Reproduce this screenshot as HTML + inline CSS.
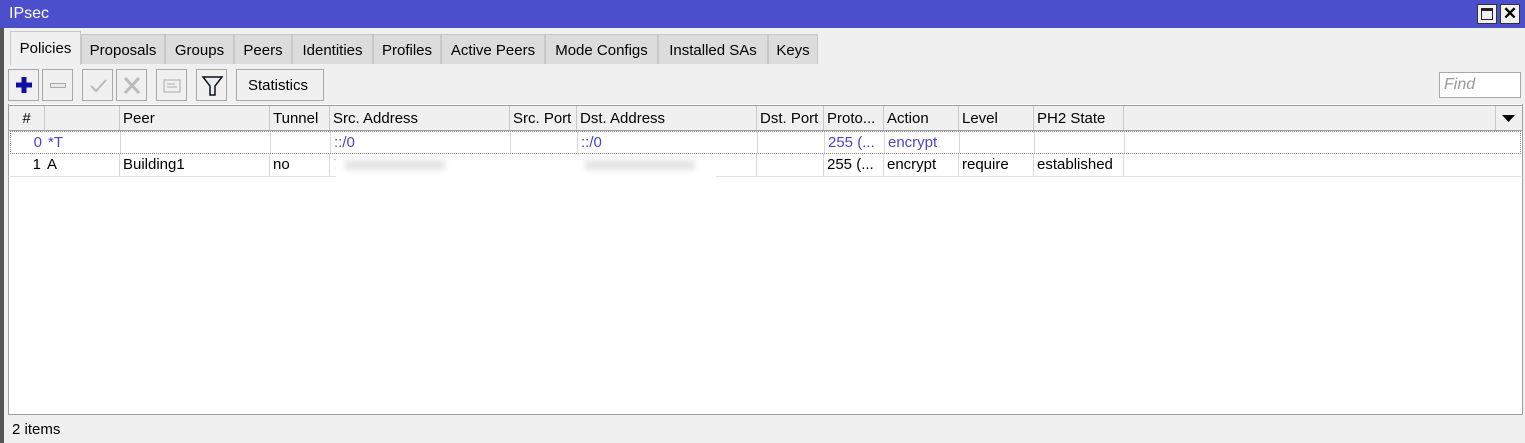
<!DOCTYPE html>
<html><head><style>
*{margin:0;padding:0;box-sizing:border-box}
body{width:1525px;height:443px;background:#f0f0f0;font-family:"Liberation Sans",Arial,sans-serif;font-size:15px;color:#000;position:relative;overflow:hidden}
.a{position:absolute}
.title{left:0;top:0;width:1525px;height:28px;background:#4b4fcc;color:#fff;padding:5px 0 0 9px;font-size:16px}
.wb{top:4px;width:20px;height:20px;background:#f0f0f0;border:1px solid #333}
.tab{top:34px;height:30px;background:#dcdcdc;border:1px solid #c8c8c8;border-bottom:none;padding:7px 0 0 0;text-align:center}
.tb{top:69px;height:32px;border:1px solid #a8a8a8;background:#f0f0f0}
.hd{top:105px;height:26px;border-top:1px solid #a0a0a0;border-bottom:1px solid #a0a0a0;background:#f0f0f0}
.c{position:absolute;top:0;height:100%;border-left:1px solid #c8c8c8;padding:4px 0 0 3px;white-space:nowrap;overflow:hidden}
.row{left:10px;width:1511px;height:23px}
.row .c{border-left:1px solid #d8d8d8;padding-top:2px}
.blue{color:#4a46c8}
</style></head><body>
<div class="a" style="left:0;top:0;width:4px;height:443px;background:#555"></div>
<div class="a title">IPsec</div>
<div class="a wb" style="left:1477px"><div class="a" style="left:3px;top:3px;width:12px;height:12px;border:1.5px solid #222;border-top-width:3px"></div></div>
<div class="a wb" style="left:1500px;text-align:center;font-size:17px;line-height:17px;font-weight:bold">✕</div>

<div class="a tab" style="left:10px;width:71px;top:31px;height:34px;background:#f0f0f0;padding-top:8px">Policies</div>
<div class="a tab" style="left:81px;width:84px">Proposals</div>
<div class="a tab" style="left:165px;width:69px">Groups</div>
<div class="a tab" style="left:234px;width:58px">Peers</div>
<div class="a tab" style="left:292px;width:81px">Identities</div>
<div class="a tab" style="left:373px;width:68px">Profiles</div>
<div class="a tab" style="left:441px;width:104px">Active Peers</div>
<div class="a tab" style="left:545px;width:113px">Mode Configs</div>
<div class="a tab" style="left:658px;width:110px">Installed SAs</div>
<div class="a tab" style="left:768px;width:50px">Keys</div>

<div class="a tb" style="left:8px;width:31px"><svg width="31" height="32"><path d="M15 7v16M7 15h16" stroke="#1010a0" stroke-width="5"/></svg></div>
<div class="a tb" style="left:42px;width:31px"><div class="a" style="left:7px;top:13px;width:16px;height:5px;border:1px solid #aaa;background:#e8e8e8"></div></div>
<div class="a tb" style="left:82px;width:31px"><svg width="31" height="32"><path d="M8 16l5 5 10-11" stroke="#bbb" stroke-width="2" fill="none"/></svg></div>
<div class="a tb" style="left:116px;width:31px"><svg width="31" height="32"><path d="M8 8l14 15M22 8L8 23" stroke="#bbb" stroke-width="3" fill="none"/></svg></div>
<div class="a tb" style="left:156px;width:31px"><svg width="31" height="32"><rect x="7" y="10" width="16" height="12" stroke="#aaa" fill="none"/><path d="M10 14h8M10 17h10" stroke="#aaa"/></svg></div>
<div class="a tb" style="left:196px;width:31px"><svg width="31" height="32"><path d="M6 7h19l-7 9v9h-5v-9z" stroke="#111" stroke-width="1.5" fill="#e8eef8"/></svg></div>
<div class="a tb" style="left:236px;width:88px;padding:7px 0 0 11px">Statistics</div>
<div class="a" style="left:1439px;top:72px;width:82px;height:26px;border:1px solid #a8a8a8;background:#fff;color:#999;font-style:italic;padding:3px 0 0 4px;font-size:16px">Find</div>

<div class="a" style="left:8px;top:104px;width:1515px;height:311px;background:#fff;border-left:1px solid #a0a0a0;border-right:1px solid #a0a0a0"></div>
<div class="a hd" style="left:9px;width:1513px">
<div class="c" style="left:0;width:35px;border:none;text-align:center;padding-left:0">#</div>
<div class="c" style="left:35px;width:75px"></div>
<div class="c" style="left:110px;width:150px">Peer</div>
<div class="c" style="left:260px;width:60px">Tunnel</div>
<div class="c" style="left:320px;width:180px">Src. Address</div>
<div class="c" style="left:500px;width:67px">Src. Port</div>
<div class="c" style="left:567px;width:180px">Dst. Address</div>
<div class="c" style="left:747px;width:67px">Dst. Port</div>
<div class="c" style="left:814px;width:60px">Proto...</div>
<div class="c" style="left:874px;width:75px">Action</div>
<div class="c" style="left:949px;width:75px">Level</div>
<div class="c" style="left:1024px;width:90px">PH2 State</div>
<div class="c" style="left:1114px;width:372px"></div>
<div class="c" style="left:1486px;width:27px;padding:0"><svg width="26" height="24"><path d="M6 9h13l-6.5 7z" fill="#000"/></svg></div>
</div>

<div class="a row blue" style="top:131px;border:1px dotted #888">
<div class="c" style="left:0;width:34px;border:none;text-align:right;padding-right:3px">0</div>
<div class="c" style="left:34px;width:75px;border-left:none">*T</div>
<div class="c" style="left:109px;width:150px"></div>
<div class="c" style="left:259px;width:60px"></div>
<div class="c" style="left:319px;width:180px">::/0</div>
<div class="c" style="left:499px;width:67px"></div>
<div class="c" style="left:566px;width:180px">::/0</div>
<div class="c" style="left:746px;width:67px"></div>
<div class="c" style="left:813px;width:60px">255 (...</div>
<div class="c" style="left:873px;width:75px">encrypt</div>
<div class="c" style="left:948px;width:75px"></div>
<div class="c" style="left:1023px;width:90px"></div>
<div class="c" style="left:1113px;width:398px"></div>
</div>
<div class="a row" style="top:154px;border-bottom:1px solid #e0e0e0">
<div class="c" style="left:0;width:34px;border:none;text-align:right;padding-right:3px">1</div>
<div class="c" style="left:34px;width:75px;border-left:none">A</div>
<div class="c" style="left:109px;width:150px">Building1</div>
<div class="c" style="left:259px;width:60px">no</div>
<div class="c" style="left:319px;width:180px;color:#ccc">7</div>
<div class="c" style="left:499px;width:67px"></div>
<div class="c" style="left:566px;width:180px"></div>
<div class="c" style="left:746px;width:67px"></div>
<div class="c" style="left:813px;width:60px">255 (...</div>
<div class="c" style="left:873px;width:75px">encrypt</div>
<div class="c" style="left:948px;width:75px">require</div>
<div class="c" style="left:1023px;width:90px">established</div>
<div class="c" style="left:1113px;width:398px"></div>
</div>
<div class="a" style="left:336px;top:154px;width:380px;height:26px;background:#fff"></div>
<div class="a" style="left:345px;top:160px;width:100px;height:10px;background:#e4e4e4;filter:blur(3px)"></div>
<div class="a" style="left:585px;top:160px;width:110px;height:10px;background:#e4e4e4;filter:blur(3px)"></div>

<div class="a" style="left:8px;top:414px;width:1515px;height:1px;background:#a0a0a0"></div>
<div class="a" style="left:12px;top:421px">2 items</div>
</body></html>
